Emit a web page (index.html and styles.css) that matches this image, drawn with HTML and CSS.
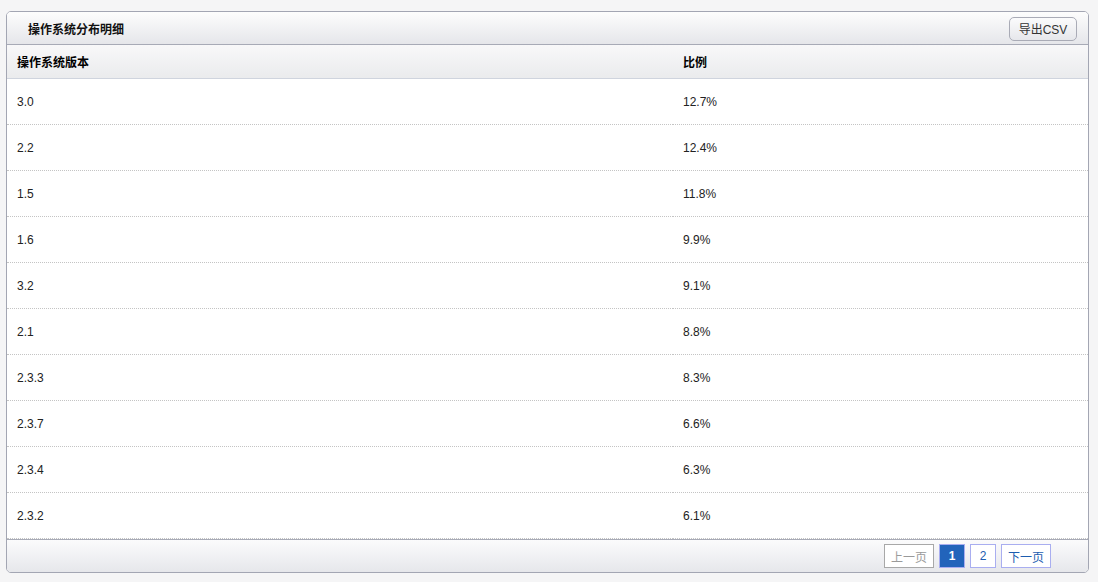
FILE: index.html
```html
<!doctype html>
<html>

<head>
    <title>操作系统分布明细</title>
    <meta charset="utf-8">
    <link rel="stylesheet" href="styles.css">
</head>

<body>
    <div class="panel">
        <div class="panel-head">
            <h2 class="panel-title">操作系统分布明细</h2>
            <button class="btn-export">导出CSV</button>
        </div>
        <table class="grid">
            <thead>
                <tr>
                    <th class="col-ver">操作系统版本</th>
                    <th>比例</th>
                </tr>
            </thead>
            <tbody>
                <tr><td>3.0</td><td>12.7%</td></tr>
                <tr><td>2.2</td><td>12.4%</td></tr>
                <tr><td>1.5</td><td>11.8%</td></tr>
                <tr><td>1.6</td><td>9.9%</td></tr>
                <tr><td>3.2</td><td>9.1%</td></tr>
                <tr><td>2.1</td><td>8.8%</td></tr>
                <tr><td>2.3.3</td><td>8.3%</td></tr>
                <tr><td>2.3.7</td><td>6.6%</td></tr>
                <tr><td>2.3.4</td><td>6.3%</td></tr>
                <tr><td>2.3.2</td><td>6.1%</td></tr>
            </tbody>
        </table>
        <div class="panel-foot">
            <span class="pg pg-off pg-wide">上一页</span>
            <span class="pg pg-on">1</span>
            <span class="pg">2</span>
            <span class="pg pg-wide">下一页</span>
        </div>
    </div>
</body>

</html>
```

FILE: styles.css
```css
body {
    margin: 0;
    background-color: #f5f5f6;
    font-family: "Liberation Sans", "Noto Sans CJK SC", sans-serif;
    font-size: 12px;
    color: #222;
}

.panel {
    margin: 11px 9px 9px 6px;
    width: 1081px;
    border: 1px solid #a3a6b3;
    border-radius: 5px;
    background-color: #fff;
    overflow: hidden;
}

.panel-head {
    display: flex;
    align-items: center;
    justify-content: space-between;
    height: 32px;
    padding: 0 11px 0 21px;
    border-bottom: 1px solid #a7aab6;
    background: linear-gradient(#fdfdfd, #e5e6ea);
}

.panel-title {
    margin: 0;
    font-family: "Noto Sans CJK SC", sans-serif;
    font-size: 12px;
    font-weight: bold;
    color: #111;
}

.btn-export {
    width: 68px;
    height: 24px;
    padding: 0;
    margin-top: 1px;
    border: 1px solid #a9abb6;
    border-radius: 5px;
    background: linear-gradient(#fbfbfc, #e6e7eb);
    font-family: "Liberation Sans", "Noto Sans CJK SC", sans-serif;
    font-size: 12px;
    color: #333;
}

.grid {
    width: 100%;
    border-collapse: collapse;
}

.grid th {
    height: 33px;
    padding: 0 10px;
    text-align: left;
    font-family: "Noto Sans CJK SC", sans-serif;
    font-size: 12px;
    font-weight: bold;
    color: #000;
    background: linear-gradient(#f8f8f9, #eaebed);
    border-bottom: 1px solid #cfd4de;
}

.grid .col-ver {
    width: 646px;
}

.grid td {
    height: 45px;
    padding: 0 10px;
    border-bottom: 1px dotted #c4c4c4;
    color: #222;
}

.panel-foot {
    display: flex;
    justify-content: flex-end;
    align-items: center;
    gap: 5px;
    height: 32px;
    padding-right: 37px;
    border-top: 1px solid #a7aab6;
    background: linear-gradient(#fbfbfc, #e6e7eb);
}

.pg {
    display: flex;
    align-items: center;
    justify-content: center;
    box-sizing: border-box;
    width: 26px;
    height: 24px;
    border: 1px solid #a9aef0;
    background-color: #fff;
    color: #1d5db0;
    font-family: "Liberation Sans", "Noto Sans CJK SC", sans-serif;
    font-size: 12px;
}

.pg-wide {
    width: 50px;
}

.pg-off {
    border-color: #a8a8a8;
    color: #9a9a9a;
}

.pg-on {
    background-color: #2264bb;
    color: #fff;
    font-weight: bold;
}
```
